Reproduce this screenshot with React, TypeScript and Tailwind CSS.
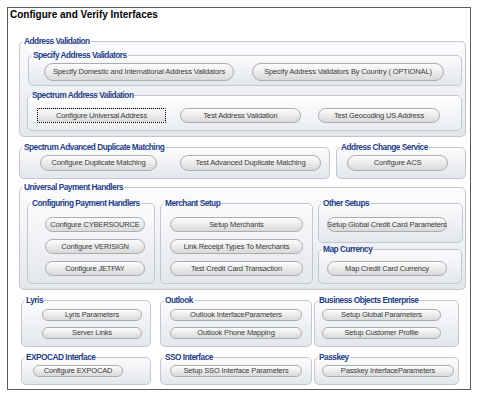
import type { ReactNode } from "react";

// Grouped box with a legend sitting on its top border
function Group({ title, className = "", children }: { title: string; className?: string; children?: ReactNode }) {
  return (
    <fieldset
      className={`shrink-0 min-w-0 rounded-[5px] border border-[#c3c8d0] bg-[linear-gradient(#fbfcfd,#e3e6eb)] ${className}`}
    >
      <legend className="ml-[3px] px-[1px] text-[8.3px] leading-[10px] font-bold tracking-[-0.5px] text-[#1f3d86]">
        {title}
      </legend>
      {children}
    </fieldset>
  );
}

function Btn({ label, className = "", focus = false }: { label: string; className?: string; focus?: boolean }) {
  return (
    <button
      className={`flex shrink-0 items-center justify-center whitespace-nowrap text-[7.5px] leading-none tracking-[-0.15px] text-[#3a3a3a] bg-[linear-gradient(#fdfdfd,#d9d9d9)] ${
        focus ? "rounded-[1px] border border-dotted border-black" : "rounded-full border border-[#a9acb1]"
      } ${className}`}
    >
      {label}
    </button>
  );
}

export default function App() {
  return (
    <div className="w-[479px] h-[398px] bg-white pl-[7px] pt-[7px] font-['Liberation_Sans',Arial,sans-serif]">
      <div className="w-[464px] h-[383px] border border-[#5a5a5a]">
        {/* Title */}
        <div className="mt-[1px] pl-[2px] h-[12px] text-[10px] leading-[12px] font-bold text-black">
          Configure and Verify Interfaces
        </div>

        {/* Address Validation */}
        <Group title="Address Validation" className="ml-[11px] mt-[15px] w-[447px] h-[101px]">
          <Group title="Specify Address Validators" className="ml-[8px] mt-[4px] w-[434px] h-[36px]">
            <div className="flex mt-[3px] ml-[15px] gap-[18px]">
              <Btn label="Specify Domestic and International Address Validators" className="w-[190px] h-[18px]" />
              <Btn label="Specify Address Validators By Country ( OPTIONAL)" className="w-[192px] h-[18px]" />
            </div>
          </Group>
          <Group
            title="Spectrum Address Validation"
            className="ml-[7px] mt-[4px] w-[435px] h-[41px] !bg-[linear-gradient(#ffffff,#e9ecf0)]"
          >
            <div className="flex mt-[8px] ml-[9px]">
              <Btn label="Configure Universal Address" focus className="w-[129px] h-[15px]" />
              <Btn label="Test Address Validation" className="ml-[14px] w-[121px] h-[15px]" />
              <Btn label="Test Geocoding US Address" className="ml-[17px] w-[122px] h-[15px]" />
            </div>
          </Group>
        </Group>

        {/* Duplicate matching + ACS */}
        <div className="flex ml-[11px] mt-[5px]">
          <Group title="Spectrum Advanced Duplicate Matching" className="w-[311px] h-[37px]">
            <div className="flex mt-[3px] ml-[20px]">
              <Btn label="Configure Duplicate Matching" className="w-[117px] h-[16px]" />
              <Btn label="Test Advanced Duplicate Matching" className="ml-[23px] w-[141px] h-[16px]" />
            </div>
          </Group>
          <Group title="Address Change Service" className="ml-[6px] w-[130px] h-[37px]">
            <div className="flex mt-[3px] ml-[10px]">
              <Btn label="Configure ACS" className="w-[101px] h-[16px]" />
            </div>
          </Group>
        </div>

        {/* Universal Payment Handlers */}
        <Group title="Universal Payment Handlers" className="ml-[11px] mt-[3px] w-[447px] h-[108px]">
          <div className="flex mt-[6px] ml-[7px]">
            <Group title="Configuring Payment Handlers" className="w-[128px] h-[86px]">
              <div className="flex flex-col mt-[9px] ml-[17px] gap-[7px]">
                <Btn label="Configure CYBERSOURCE" className="w-[100px] h-[15px]" />
                <Btn label="Configure VERISIGN" className="w-[100px] h-[15px]" />
                <Btn label="Configure JETPAY" className="w-[100px] h-[15px]" />
              </div>
            </Group>
            <Group title="Merchant Setup" className="ml-[5px] w-[153px] h-[86px]">
              <div className="flex flex-col mt-[9px] ml-[9px] gap-[7px]">
                <Btn label="Setup Merchants" className="w-[133px] h-[15px]" />
                <Btn label="Link Receipt Types To Merchants" className="w-[133px] h-[15px]" />
                <Btn label="Test Credit Card Transaction" className="w-[133px] h-[15px]" />
              </div>
            </Group>
            <div className="flex flex-col ml-[5px]">
              <Group title="Other Setups" className="w-[145px] h-[45px]">
                <div className="flex mt-[9px] ml-[8px]">
                  <Btn label="Setup Global Credit Card Parameters" className="w-[120px] h-[15px]" />
                </div>
              </Group>
              <Group title="Map Currency" className="mt-[1px] w-[144px] h-[40px]">
                <div className="flex mt-[7px] ml-[8px]">
                  <Btn label="Map Credit Card Currency" className="w-[120px] h-[15px]" />
                </div>
              </Group>
            </div>
          </div>
        </Group>

        {/* Lyris / Outlook / BOE */}
        <div className="flex ml-[13px] mt-[5px]">
          <Group title="Lyris" className="w-[130px] h-[52px]">
            <div className="flex flex-col mt-[4px] ml-[20px] gap-[6px]">
              <Btn label="Lyris Parameters" className="w-[100px] h-[12px]" />
              <Btn label="Server Links" className="w-[100px] h-[12px]" />
            </div>
          </Group>
          <Group title="Outlook" className="ml-[9px] w-[152px] h-[52px]">
            <div className="flex flex-col mt-[4px] ml-[9px] gap-[6px]">
              <Btn label="Outlook InterfaceParameters" className="w-[132px] h-[12px]" />
              <Btn label="Outlook Phone Mapping" className="w-[132px] h-[12px]" />
            </div>
          </Group>
          <Group title="Business Objects Enterprise" className="ml-[2px] w-[145px] h-[52px]">
            <div className="flex flex-col mt-[4px] ml-[7px] gap-[6px]">
              <Btn label="Setup Global Parameters" className="w-[119px] h-[12px]" />
              <Btn label="Setup Customer Profile" className="w-[119px] h-[12px]" />
            </div>
          </Group>
        </div>

        {/* EXPOCAD / SSO / Passkey */}
        <div className="flex ml-[13px] mt-[5px]">
          <Group title="EXPOCAD Interface" className="w-[130px] h-[33px]">
            <div className="flex mt-[3px] ml-[11px]">
              <Btn label="Configure EXPOCAD" className="w-[90px] h-[12px]" />
            </div>
          </Group>
          <Group title="SSO Interface" className="ml-[9px] w-[152px] h-[33px]">
            <div className="flex mt-[3px] ml-[9px]">
              <Btn label="Setup SSO Interface Parameters" className="w-[132px] h-[12px]" />
            </div>
          </Group>
          <Group title="Passkey" className="ml-[2px] w-[145px] h-[33px]">
            <div className="flex mt-[3px] ml-[7px]">
              <Btn label="Passkey InterfaceParameters" className="w-[132px] h-[12px]" />
            </div>
          </Group>
        </div>
      </div>
    </div>
  );
}
